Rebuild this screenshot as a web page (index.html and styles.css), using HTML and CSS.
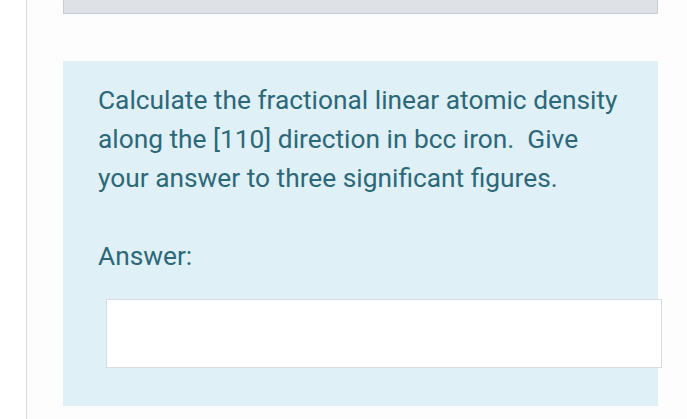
FILE: index.html
```html
<!DOCTYPE html>
<html>
<head>
<meta charset="utf-8">
<link rel="stylesheet" href="styles.css">
</head>
<body>
<div class="page">
  <div class="gutter"></div>
  <main class="content">
    <div class="prev-box"></div>
    <section class="question">
      <p class="qtext">Calculate the fractional linear atomic density along the [110] direction in bcc iron.&nbsp; Give your answer to three significant figures.</p>
      <p class="label">Answer:</p>
      <div class="answer-input"></div>
    </section>
  </main>
</div>
</body>
</html>
```
FILE: styles.css
```css
html, body {
  margin: 0;
  padding: 0;
  background: #fdfdfd;
}
body {
  font-family: Roboto, "Liberation Sans", sans-serif;
  overflow: hidden;
  height: 419px;
}
.page {
  display: flex;
  height: 419px;
}
.gutter {
  width: 26px;
  flex: none;
  background: #ffffff;
  border-right: 1px solid #dcdcdc;
}
.content {
  padding-left: 36px;
  flex: 1;
}
.prev-box {
  width: 593px;
  height: 13px;
  background: #dee1e6;
  border: 1px solid #c8ccd4;
  border-top: none;
}
.question {
  margin-top: 47px;
  width: 560px;
  height: 305px;
  padding: 20px 0 20px 35px;
  background: #dff0f7;
  color: #2d6878;
  font-size: 26.3px;
  line-height: 39px;
}
.qtext {
  margin: 0;
  width: 525px;
}
.label {
  margin: 39px 0 0 0;
}
.answer-input {
  margin: 23px 0 0 8px;
  width: 554px;
  height: 67px;
  background: #ffffff;
  border: 1.5px solid #d8dcde;
}
```
